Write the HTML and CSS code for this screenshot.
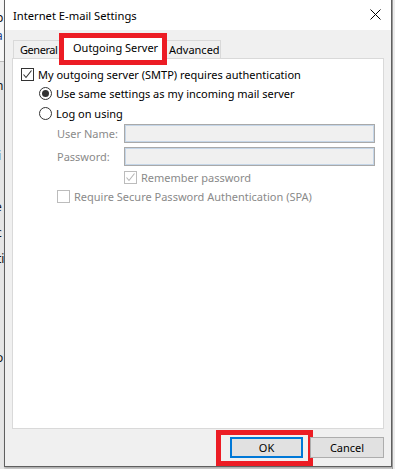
FILE: index.html
```html
<!DOCTYPE html>
<html>
<head>
<meta charset="utf-8">
<link rel="stylesheet" href="styles.css">
</head>
<body>
<div class="screen">
  <div class="behind-left">
    <div class="bl-top">
      <span class="frag f1">p</span>
      <span class="frag f2">a</span>
    </div>
    <div class="bl-bottom">
      <span class="frag f3">n</span>
      <span class="frag f4">i</span>
      <span class="frag f5">e</span>
      <span class="frag f6">c</span>
      <span class="frag f7">ti</span>
      <span class="frag f8">o</span>
    </div>
  </div>
  <div class="dialog">
    <div class="titlebar">
      <span class="title">Internet E-mail Settings</span>
      <svg class="close" width="11" height="11" viewBox="0 0 11 11"><path d="M0.5 0.5 L10.5 10.5 M10.5 0.5 L0.5 10.5" stroke="#000" stroke-width="1" fill="none"/></svg>
    </div>
    <div class="body">
      <div class="tabs">
        <div class="tab first">General</div>
        <div class="tab active">Outgoing Server<span class="mark mark-tab"></span></div>
        <div class="tab">Advanced</div>
      </div>
      <div class="panel">
        <div class="row r1">
          <span class="cb checked"><svg width="11" height="11" viewBox="0 0 11 11"><path d="M1.5 5.5 L4 8.5 L9.5 1.5" stroke="#333" stroke-width="1.1" fill="none"/></svg></span>
          <span class="lbl">My outgoing server (SMTP) requires authentication</span>
        </div>
        <div class="row r2 ind1">
          <span class="radio on"><span class="dot"></span></span>
          <span class="lbl">Use same settings as my incoming mail server</span>
        </div>
        <div class="row r3 ind1">
          <span class="radio"></span>
          <span class="lbl">Log on using</span>
        </div>
        <div class="row field ind2">
          <span class="flabel">User Name:</span>
          <span class="input"></span>
        </div>
        <div class="row field f2row ind2">
          <span class="flabel">Password:</span>
          <span class="input"></span>
        </div>
        <div class="row r6 ind3">
          <span class="cb dis"><svg width="11" height="11" viewBox="0 0 11 11"><path d="M1.5 5.5 L4 8.5 L9.5 1.5" stroke="#b5b5b5" stroke-width="1.1" fill="none"/></svg></span>
          <span class="lbl dis-text">Remember password</span>
        </div>
        <div class="row r7 ind2">
          <span class="cb dis"></span>
          <span class="lbl dis-text">Require Secure Password Authentication (SPA)</span>
        </div>
      </div>
      <div class="buttons">
        <div class="btn ok">OK<span class="mark mark-ok"></span></div>
        <div class="btn">Cancel</div>
      </div>
    </div>
  </div>
  <div class="behind-right"></div>
</div>
</body>
</html>
```

FILE: styles.css
```css
* { box-sizing: border-box; }
html, body {
  margin: 0;
  padding: 0;
  width: 395px;
  height: 469px;
  overflow: hidden;
  background: #d6d6d6;
  font-family: "Segoe UI", "Noto Sans", "Open Sans", sans-serif;
  font-size: 11px;
  color: #000;
}
.screen {
  display: flex;
  width: 395px;
  height: 469px;
  align-items: flex-start;
}
.behind-left {
  width: 4px;
  height: 469px;
  overflow: hidden;
  display: flex;
  flex-direction: column;
  flex: none;
  background: #e6e6e6;
}
.bl-top {
  height: 62px;
  background: #f7f7f7;
  border-bottom: 1px solid #bcbcbc;
  display: flex;
  flex-direction: column;
}
.bl-bottom {
  flex: 1;
  display: flex;
  flex-direction: column;
}
.frag {
  display: block;
  font-size: 12px;
  line-height: 14px;
  margin-left: -4px;
  color: #111;
}
.f1 { margin-top: 11px; }
.f2 { margin-top: 4px; color: #1b3f8a; }
.f3 { margin-top: 17px; }
.f4 { margin-top: 56px; margin-left: -2px; }
.f5 { margin-top: 37px; margin-left: -5px; }
.f6 { margin-top: 12px; }
.f7 { margin-top: 12px; margin-left: -3px; }
.f8 { margin-top: 85px; }

.dialog {
  width: 388px;
  height: 467px;
  flex: none;
  border: 1px solid #5f5f5f;
  border-top: none;
  background: #f0f0f0;
  display: flex;
  flex-direction: column;
  box-shadow: 1px 1px 2px rgba(0,0,0,0.25);
}
.titlebar {
  height: 30px;
  background: #fff;
  display: flex;
  align-items: center;
  justify-content: space-between;
  padding: 0 10px 0 8px;
  flex: none;
}
.title {
  font-size: 11.2px;
  margin-top: 0px;
}
.close {
  display: block;
  margin-top: -1px;
}
.body {
  flex: 1;
  display: flex;
  flex-direction: column;
  padding: 0 7px 0 7px;
}
.tabs {
  display: flex;
  align-items: flex-end;
  height: 28px;
  padding-left: 1px;
  position: relative;
  z-index: 2;
}
.tab {
  height: 18px;
  border: 1px solid #d9d9d9;
  border-bottom: none;
  background: #f0f0f0;
  padding: 0 6px;
  line-height: 17px;
  white-space: nowrap;
  position: relative;
  flex: none;
}
.tab + .tab { margin-left: -1px; }
.tab.first { width: 52px; letter-spacing: -0.45px; }
.tab:last-child { width: 58px; padding-left: 5px; }
.tab.active {
  height: 22px;
  margin: 0 -2px -1px -2px;
  background: #fff;
  padding: 0 7px 0 9px;
  width: 102px;
  line-height: 19px;
  z-index: 1;
}
.tab.active + .tab { margin-left: 0; }
.panel {
  height: 371px;
  background: #fff;
  border: 1px solid #d9d9d9;
  padding: 5px 0 0 8px;
  display: flex;
  flex-direction: column;
  flex: none;
}
.row {
  display: flex;
  align-items: center;
  white-space: nowrap;
}
.r1 { height: 20px; }
.r2 { height: 18px; }
.r3 { height: 22px; }
.field { height: 19px; }
.f2row { margin-top: 4px; }
.r6 { height: 22px; }
.r7 { height: 16px; }
.ind1 { padding-left: 18px; }
.ind2 { padding-left: 36px; }
.ind3 { padding-left: 103px; }
.cb {
  width: 13px;
  height: 13px;
  border: 1px solid #333;
  background: #fff;
  flex: none;
  display: flex;
  align-items: center;
  justify-content: center;
}
.cb svg { display: block; }
.cb.dis { border-color: #bcbcbc; }
.radio {
  width: 13px;
  height: 13px;
  border: 1px solid #333;
  border-radius: 50%;
  background: #fff;
  flex: none;
  display: flex;
  align-items: center;
  justify-content: center;
}
.dot {
  width: 7px;
  height: 7px;
  border-radius: 50%;
  background: #333;
}
.lbl { margin-left: 4px; }
.dis-text { color: #8a8a8a; }
.flabel {
  width: 67px;
  color: #8a8a8a;
  flex: none;
}
.input {
  width: 251px;
  height: 19px;
  background: #f0f0f0;
  border: 1px solid #a9a9a9;
  box-shadow: inset 0 0 0 1px #c5d6e8;
  flex: none;
}
.buttons {
  display: flex;
  justify-content: flex-end;
  gap: 7px;
  margin-top: 8px;
}
.btn {
  width: 74px;
  height: 21px;
  background: #e1e1e1;
  border: 1px solid #adadad;
  display: flex;
  align-items: center;
  justify-content: center;
  position: relative;
}
.btn.ok {
  width: 73px;
  border: 2px solid #0078d7;
}
.mark {
  position: absolute;
  border: 5px solid #ec1c24;
  pointer-events: none;
}
.mark-tab {
  left: -5px;
  right: -3px;
  top: -5px;
  bottom: -6px;
}
.mark-ok {
  left: -16px;
  right: -12px;
  top: -9px;
  bottom: -10px;
}
.behind-right {
  flex: 1;
  height: 469px;
  background: #ececec;
  border-left: 1px solid #9a9a9a;
}
```
